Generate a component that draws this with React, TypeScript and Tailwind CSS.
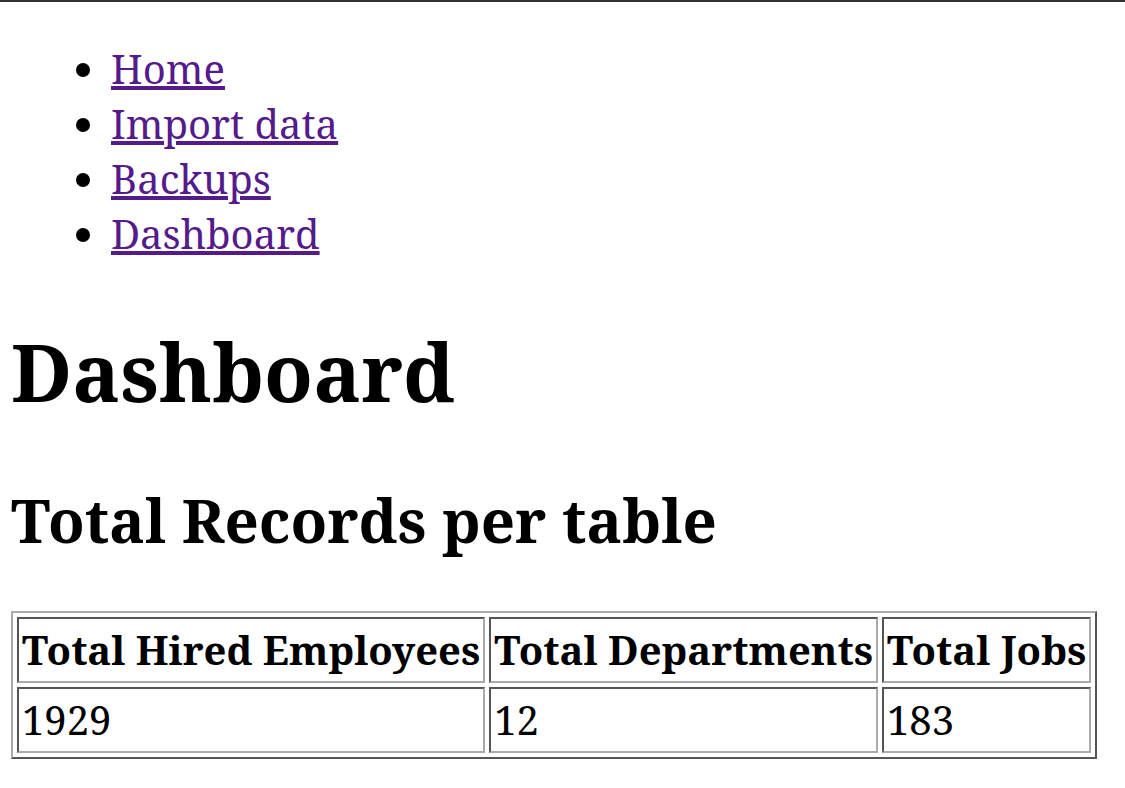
export default function App() {
  const links = ["Home", "Import data", "Backups", "Dashboard"];
  const head = ["Total Hired Employees", "Total Departments", "Total Jobs"];
  const values = ["1929", "12", "183"];

  return (
    <div className="min-h-screen bg-white border-t-2 border-[#333] px-[11px] font-['Noto_Serif','DejaVu_Serif',serif] text-[40px] leading-[normal] text-black">
      <ul className="mt-[39px] mb-0 pl-[100px] list-disc">
        {links.map((l) => (
          <li key={l}>
            <a href="#" className="text-[#551a8b] underline">
              {l}
            </a>
          </li>
        ))}
      </ul>

      <h1 className="mt-[55px] mb-[54px] text-[80px] font-bold leading-[normal]">Dashboard</h1>
      <h2 className="mb-[50px] text-[60px] font-bold leading-[normal]">Total Records per table</h2>

      <table className="border-separate border-spacing-1 border-2 border-t-[#aaa] border-l-[#aaa] border-r-[#555] border-b-[#555]">
        <thead>
          <tr>
            {head.map((h) => (
              <th
                key={h}
                className="border-2 border-t-[#555] border-l-[#555] border-r-[#aaa] border-b-[#aaa] px-[3px] pt-[3px] pb-[4px] text-left font-bold"
              >
                {h}
              </th>
            ))}
          </tr>
        </thead>
        <tbody>
          <tr>
            {values.map((v) => (
              <td
                key={v}
                className="border-2 border-t-[#555] border-l-[#555] border-r-[#aaa] border-b-[#aaa] px-[3px] pt-[3px] pb-[4px]"
              >
                {v}
              </td>
            ))}
          </tr>
        </tbody>
      </table>
    </div>
  );
}
